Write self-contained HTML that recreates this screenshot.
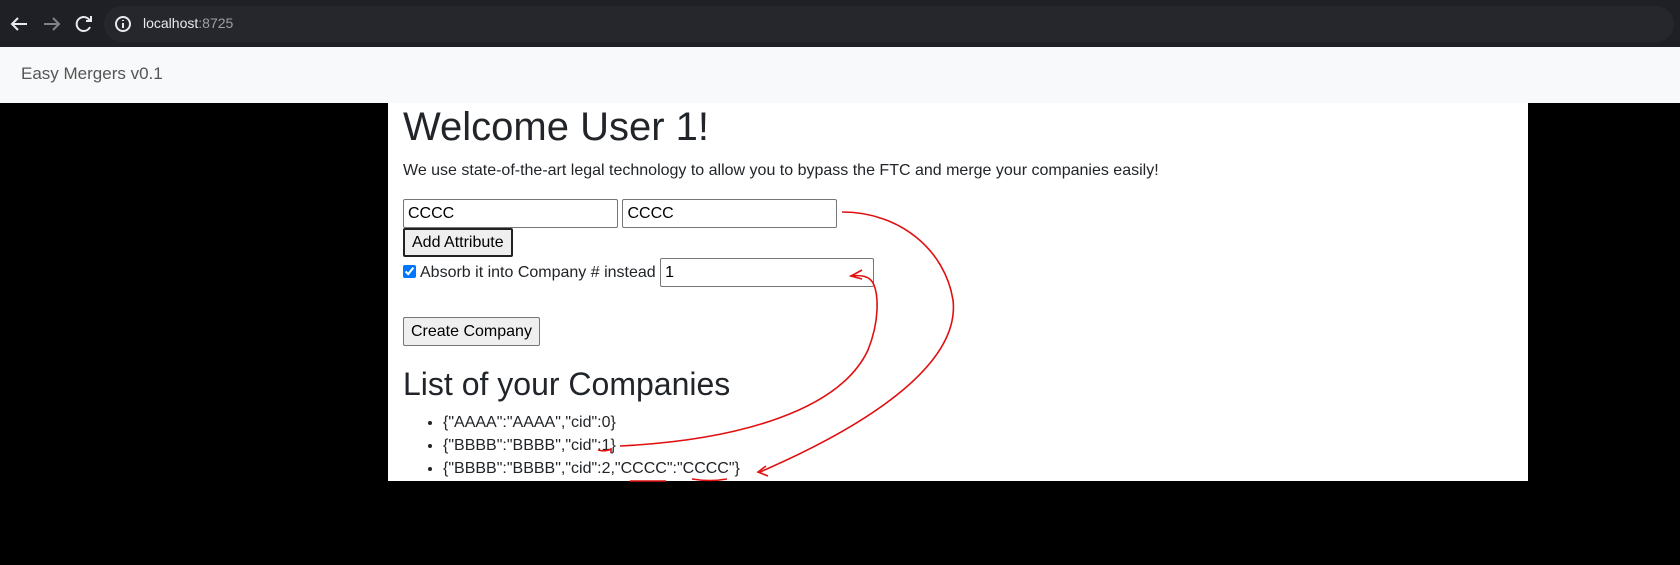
<!DOCTYPE html>
<html><head><meta charset="utf-8"><style>
*{box-sizing:border-box}
body{margin:0;width:1680px;height:565px;background:#000;font-family:"Liberation Sans",sans-serif;position:relative;overflow:hidden;color:#212529}
.chrome{position:absolute;left:0;top:0;width:1680px;height:47px;background:#1f2026}
.pill{position:absolute;left:104px;top:6px;width:1570px;height:36px;border-radius:18px;background:#25272d}
.url{position:absolute;left:143px;top:15px;font-size:14px;color:#e8eaed}
.url span{color:#9aa0a6}
.nav{position:absolute;left:0;top:47px;width:1680px;height:56px;background:#f8f9fa}
.nav div{position:absolute;left:21px;top:17px;font-size:17px;color:#555}
.main{position:absolute;left:388px;top:103px;width:1140px;height:378px;background:#fff;padding:0 15px;overflow:hidden}
h1{margin:0 0 8px;font-size:40px;font-weight:400;line-height:48px}
p{margin:0 0 16px;font-size:16px;line-height:24px}
input[type=text]{font:16px "Liberation Sans",sans-serif;height:29px;width:215px;border:1px solid #767676;padding:1px 4px;margin:0;vertical-align:middle;border-radius:2px}
button{font:16px "Liberation Sans",sans-serif;background:#efefef;border:1px solid #767676;border-radius:2px;height:29px;padding:0 7px;margin:0;white-space:nowrap;color:#000}
h2{margin:19px 0 8px;font-size:32px;font-weight:400;line-height:38px}
ul{margin:0;padding-left:40px;font-size:16px;line-height:23px}
</style></head><body>
<div class="chrome"><div class="pill"></div>
<svg width="140" height="47" style="position:absolute;left:0;top:0" fill="none" stroke-width="2">
<path d="M27 24H12M18 18l-6 6 6 6" stroke="#e8eaed"/>
<path d="M44 24h15M53 18l6 6-6 6" stroke="#80848a"/>
<path d="M90 21a7 7 0 1 0 0 6" stroke="#e8eaed"/><path d="M91 16v5h-5" stroke="#e8eaed"/>
<circle cx="123" cy="24" r="7" stroke="#e8eaed"/><path d="M123 23v5M123 20v1" stroke="#e8eaed"/>
</svg>
<div class="url">localhost<span>:8725</span></div></div>
<div class="nav"><div>Easy Mergers v0.1</div></div>
<div class="main">
<h1>Welcome User 1!</h1>
<p>We use state-of-the-art legal technology to allow you to bypass the FTC and merge your companies easily!</p>
<div style="height:29px"><input type="text" value="CCCC"> <input type="text" value="CCCC"></div>
<div style="height:30px"><button style="border:2px solid #222">Add Attribute</button></div>
<div style="height:29px;font-size:16px;line-height:29px"><input type="checkbox" checked style="margin:0 4px 0 0;width:13px;height:13px;vertical-align:-1px">Absorb it into Company # instead <input type="text" value="1" style="width:214px"></div>
<div style="height:30px"></div>
<button>Create Company</button>
<h2>List of your Companies</h2>
<ul><li>{"AAAA":"AAAA","cid":0}</li><li>{"BBBB":"BBBB","cid":1}</li><li>{"BBBB":"BBBB","cid":2,"CCCC":"CCCC"}</li></ul>
</div>
<svg width="1680" height="565" style="position:absolute;left:0;top:0" fill="none" stroke="#e01010" stroke-width="1.6">
<path d="M842 212C900 212 945 250 953 300C960 360 880 420 760 472"/>
<path d="M766 466l-8 6 10 4"/>
<path d="M620 446C740 440 840 410 868 350C880 320 878 295 874 285C870 275 860 275 850 276"/>
<path d="M862 270l-11 6 11 3"/>
<path d="M598 450Q605 452 611 449v4M630 481h36M692 479Q710 482 727 479"/>
</svg>
</body></html>
